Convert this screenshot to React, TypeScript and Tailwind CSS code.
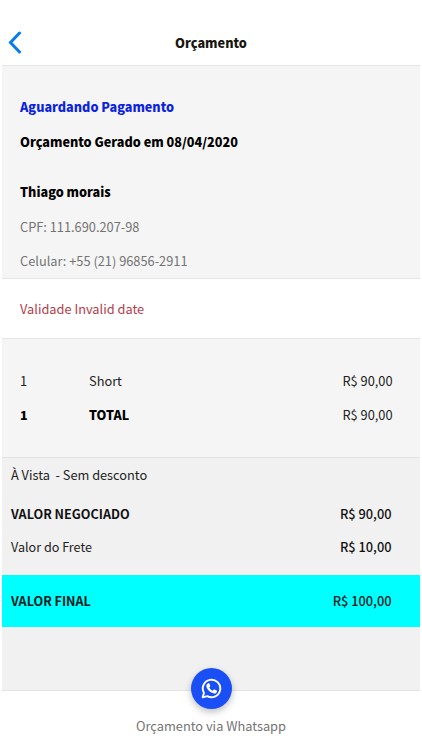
import type { ReactNode } from 'react';

function Line({ height, children, right }: { height: string; children: ReactNode; right?: ReactNode }) {
  return (
    <div className={`flex items-center justify-between whitespace-pre ${height}`}>
      <div className="flex">{children}</div>
      {right}
    </div>
  );
}

function WhatsappIcon() {
  return (
    <svg width="21" height="21" viewBox="0 0 24 24" fill="none">
      <path
        d="M1.9 22.1 3.4 17A10 10 0 1 1 7.2 20.7Z"
        stroke="currentColor"
        strokeWidth="2.2"
        strokeLinejoin="round"
      />
      <path
        d="M8.3 5.9c.7-.2 1.1 0 1.3.6l.9 2.1c.2.5.1.8-.2 1.2l-.8 1c.9 1.7 2.2 2.9 3.9 3.7l1.1-1.2c.3-.3.6-.4 1-.2l2.3 1.1c.5.3.6.6.5 1.1-.3 1.5-1.5 2.4-3.2 2.3-4.5-.5-8.600-4.400-9-8.400 0-1.500.9-2.900 2.200-3.300Z"
        fill="currentColor"
      />
    </svg>
  );
}

export default function App() {
  return (
    <div className="h-[750px] w-[422px] overflow-hidden bg-white px-[2px] font-['Noto_Sans_CJK_SC','Noto_Sans',sans-serif] text-[12.8px] leading-none text-[#222]">
      <header className="grid h-[65px] grid-cols-[40px_1fr_40px] items-center pt-[21px]">
        <svg className="ml-[5px]" width="16" height="24" viewBox="0 0 16 24" fill="none" stroke="#087bea" strokeWidth="3" strokeLinecap="round">
          <path d="M12.5 2 3.500 11.5 12.5 21" />
        </svg>
        <h1 className="text-center text-[12.7px] font-black text-[#17150f]">Orçamento</h1>
      </header>

      <section className="h-[214px] border-y border-[#e6e6e6] bg-[#f5f5f5] px-[18px] pt-[24px]">
        <Line height="h-[35px]"><b className="text-[12.65px] font-black text-[#0c24dc]">Aguardando Pagamento</b></Line>
        <Line height="h-[34px]"><b className="text-[12.65px] font-black text-black">Orçamento Gerado em 08/04/2020</b></Line>
        <div className="h-[16px]" />
        <Line height="h-[35px]"><b className="text-[12.65px] font-black text-black">Thiago morais</b></Line>
        <Line height="h-[34px]"><span className="text-[#747474]">CPF: 111.690.207-98</span></Line>
        <Line height="h-[34px]"><span className="text-[#747474]">Celular: +55 (21) 96856-2911</span></Line>
      </section>

      <section className="h-[59px] px-[18px] pt-px text-[#b33c48]">
        <Line height="h-[58px]">Validade Invalid date</Line>
      </section>

      <section className="h-[119px] border-t border-[#e6e6e6] bg-[#f5f5f5] pr-[27.5px] pl-[18px] pt-[25px]">
        <Line height="h-[34px]" right={<span>R$ 90,00</span>}>
          <span className="w-[69px]">1</span>
          <span>Short</span>
        </Line>
        <Line height="h-[34px]" right={<span>R$ 90,00</span>}>
          <b className="w-[69px] text-[12.5px] font-black text-black">1</b>
          <b className="text-[12.5px] font-black text-black">TOTAL</b>
        </Line>
      </section>

      <section className="h-[234px] border-y border-[#e2e2e2] bg-[#f1f1f1]">
        <div className="pr-[28.5px] pl-[9px]">
          <Line height="h-[34px]"><span className="text-[12.75px]">{'À Vista  - Sem desconto'}</span></Line>
          <Line height="h-[45px]" right={<span className="font-medium text-[#111]">R$ 90,00</span>}>
            <b className="text-[12.6px] font-bold text-[#111]">VALOR NEGOCIADO</b>
          </Line>
          <Line height="h-[21px]" right={<span className="font-medium text-[#111]">R$ 10,00</span>}><span className="text-[12.6px]">Valor do Frete</span></Line>
        </div>
        <div className="mt-[17px] bg-[#00ffff] pr-[28.5px] pl-[9px] text-[#0b1a1a]">
          <Line height="h-[52px]" right={<span className="font-medium">R$ 100,00</span>}>
            <b className="text-[12.6px] font-bold">VALOR FINAL</b>
          </Line>
        </div>
      </section>

      <footer className="flex h-[59px] flex-col items-center">
        <button className="relative -mt-[23px] flex size-[41px] shrink-0 items-center justify-center rounded-full bg-[#1a4ff5] text-white shadow-[0_3px_7px_rgba(0,0,0,0.25)]">
          <WhatsappIcon />
        </button>
        <span className="mt-[11px] text-[#747474]">Orçamento via Whatsapp</span>
      </footer>
    </div>
  );
}
